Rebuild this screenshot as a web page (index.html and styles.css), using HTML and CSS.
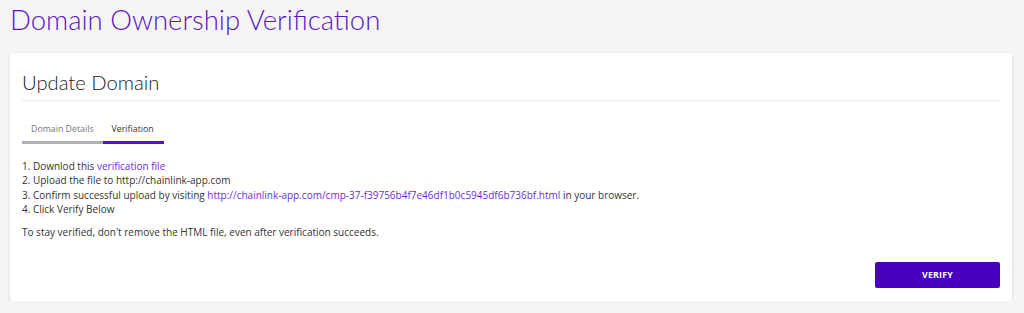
FILE: index.html
```html
<!DOCTYPE html>
<html>
<head>
<meta charset="utf-8">
<link rel="stylesheet" href="styles.css">
</head>
<body>
<h1 class="page-title">Domain Ownership Verification</h1>
<div class="card">
  <h2 class="card-title">Update Domain</h2>
  <div class="tabs">
    <div class="tab">Domain Details</div>
    <div class="tab active">Verifiation</div>
  </div>
  <div class="steps">
    <div>1. Downlod this <a href="#">verification file</a></div>
    <div>2. Upload the file to http://chainlink-app.com</div>
    <div>3. Confirm successful upload by visiting <a href="#">http://chainlink-app.com/cmp-37-f39756b4f7e46df1b0c5945df6b736bf.html</a> in your browser.</div>
    <div>4. Click Verify Below</div>
  </div>
  <p class="note">To stay verified, don't remove the HTML file, even after verification succeeds.</p>
  <div class="actions">
    <button class="verify">VERIFY</button>
  </div>
</div>
</body>
</html>
```
FILE: styles.css
```css
html, body {
  margin: 0;
  padding: 0;
  background: #f5f5f5;
}
body {
  padding: 0 12px 0 10px;
  font-family: "Open Sans", sans-serif;
}
.page-title {
  margin: 0;
  padding-top: 3px;
  height: 50px;
  box-sizing: border-box;
  font-family: "Lato", "Open Sans", sans-serif;
  font-weight: 300;
  font-size: 27.5px;
  line-height: 34px;
  color: #5b14c8;
}
.card {
  background: #fff;
  box-shadow: 0 1px 3px rgba(0,0,0,0.15);
  border-radius: 2px;
  padding: 14px 12px 12px 12px;
  margin-top: 3px;
  height: 248px;
  box-sizing: border-box;
}
.card-title {
  margin: 0;
  font-family: "Lato", "Open Sans", sans-serif;
  font-weight: 300;
  font-size: 20.2px;
  line-height: 30px;
  color: #222;
  padding-bottom: 3px;
  border-bottom: 1px solid #eaeaea;
}
.tabs {
  display: flex;
  margin-top: 22px;
}
.tab {
  font-size: 8.8px;
  color: #777;
  padding: 0 9px 5px 9px;
  line-height: 13px;
  border-bottom: 3px solid #b0b0b0;
}
.tab.active {
  color: #333;
  border-bottom-color: #5a0fd0;
  padding: 0 10px 5px 9px;
}
.steps {
  margin-top: 15px;
  font-size: 10px;
  line-height: 14.3px;
  color: #333;
}
a {
  color: #6a2ed6;
  text-decoration: none;
}
.note {
  margin: 9px 0 0 0;
  font-size: 10px;
  line-height: 14px;
  color: #333;
}
.actions {
  display: flex;
  justify-content: flex-end;
  margin-top: 23px;
}
.verify {
  width: 125px;
  height: 26px;
  background: #4a00bf;
  color: #fff;
  border: 0;
  border-radius: 2px;
  font-family: "Open Sans", sans-serif;
  font-weight: 700;
  font-size: 8.8px;
  letter-spacing: 0.2px;
}
```
